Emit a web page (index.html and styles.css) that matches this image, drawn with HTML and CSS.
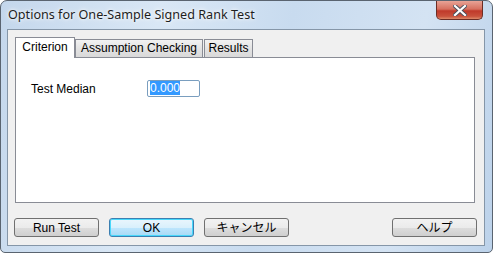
FILE: index.html
```html
<!DOCTYPE html>
<html lang="ja">
<head>
  <meta charset="UTF-8">
  <title>Options for One-Sample Signed Rank Test</title>
  <link rel="stylesheet" href="styles.css">
</head>
<body>

<div class="window">
  <div class="titlebar">
    <span class="title">Options for One-Sample Signed Rank Test</span>
    <span class="close">
      <svg width="14" height="11" viewBox="0 0 14 11">
        <path d="M2 1 L12 10 M12 1 L2 10" stroke="#4a4f5c" stroke-width="4" stroke-linecap="square"/>
        <path d="M2 1 L12 10 M12 1 L2 10" stroke="#fff" stroke-width="2.2" stroke-linecap="square"/>
      </svg>
    </span>
  </div>

  <div class="client">
    <div class="tabs">
      <span class="tab active tab-criterion">Criterion</span>
      <span class="tab tab-assumption">Assumption Checking</span>
      <span class="tab tab-results">Results</span>
    </div>
    <div class="panel">
      <div class="row">
        <label class="label">Test Median</label>
        <span class="input"><span class="sel">0.000</span></span>
      </div>
    </div>
    <div class="buttons">
      <button class="btn">Run Test</button>
      <button class="btn default">OK</button>
      <button class="btn">キャンセル</button>
      <span class="spacer"></span>
      <button class="btn">ヘルプ</button>
    </div>
  </div>
</div>

</body>
</html>
```

FILE: styles.css
```css
html, body {
  margin: 0;
  padding: 0;
  background: #fff;
}
.window {
  box-sizing: border-box;
  width: 493px;
  height: 253px;
  border: 1px solid #5a6470;
  border-radius: 7px 7px 5px 5px;
  background: linear-gradient(100deg, #c4d7ec 0%, #d9e7f5 30%, #c8dbef 55%, #d4e3f3 80%, #bcd2ea 100%);
  display: flex;
  flex-direction: column;
  font-family: "Liberation Sans", "Noto Sans CJK JP", sans-serif;
}
.titlebar {
  height: 28px;
  display: flex;
  align-items: flex-start;
}
.title {
  margin: 5px 0 0 7px;
  font-family: "Noto Sans", "Liberation Sans", sans-serif;
  font-size: 12.6px;
  color: #1e1e1e;
  text-shadow: 0 0 6px #fff, 0 0 3px #fff;
}
.close {
  margin-left: auto;
  margin-right: 9px;
  width: 47px;
  height: 19px;
  box-sizing: border-box;
  border: 1px solid #6b2d25;
  border-top: none;
  border-radius: 0 0 5px 5px;
  background: linear-gradient(#e8a396 0%, #d6705f 45%, #c0392a 55%, #c9523c 85%, #de8a6a 100%);
  display: flex;
  align-items: center;
  justify-content: center;
}
.client {
  flex: 1;
  margin: 0 7px 6px 6px;
  background: #f0f0f0;
  border: 1px solid #8596a8;
  display: flex;
  flex-direction: column;
}
.tabs {
  display: flex;
  align-items: flex-end;
  padding: 5px 0 0 7px;
  height: 22px;
  font-size: 12px;
}
.tab {
  box-sizing: border-box;
  height: 18px;
  padding-top: 1px;
  text-align: center;
  border: 1px solid #898c95;
  border-bottom: none;
  background: linear-gradient(#f2f2f2, #e3e3e3 50%, #d9d9d9);
  color: #000;
}
.tab-criterion {
  width: 60px;
}
.tab-assumption {
  width: 128px;
  margin-right: 1px;
}
.tab-results {
  width: 49px;
}
.tab.active {
  height: 21px;
  margin-bottom: -1px;
  padding-top: 2px;
  background: #fff;
  position: relative;
  z-index: 1;
}
.panel {
  margin: 0 9px 0 7px;
  height: 146px;
  box-sizing: border-box;
  border: 1px solid #898c95;
  background: #fff;
  padding-top: 22px;
}
.row {
  display: flex;
  align-items: center;
  font-size: 12px;
}
.label {
  width: 116px;
  padding-left: 15px;
}
.input {
  box-sizing: border-box;
  width: 53px;
  height: 17px;
  border: 1px solid #7a9ebf;
  border-radius: 2px;
  padding: 1px 0 0 2px;
  font-size: 12px;
  line-height: 13px;
}
.sel {
  background: #3399ff;
  color: #fff;
}
.buttons {
  display: flex;
  margin-top: 15px;
  padding: 0 7px 0 6px;
}
.btn {
  box-sizing: border-box;
  width: 85px;
  height: 19px;
  margin-right: 10px;
  border: 1px solid #707070;
  border-radius: 3px;
  background: linear-gradient(#f2f2f2 0%, #ebebeb 50%, #dddddd 51%, #cfcfcf 100%);
  font-family: "Liberation Sans", "Noto Sans CJK JP", sans-serif;
  font-size: 12px;
  color: #000;
  padding: 0;
  line-height: 16px;
}
.btn.default {
  border-color: #3c7fb1;
  box-shadow: inset 0 0 0 1px #48d8fb;
  background: linear-gradient(#eaf6fd 0%, #d9f0fc 50%, #bee6fd 51%, #a7d9f5 100%);
}
.spacer {
  flex: 1;
}
.buttons .btn:last-child {
  margin-right: 0;
}
```
